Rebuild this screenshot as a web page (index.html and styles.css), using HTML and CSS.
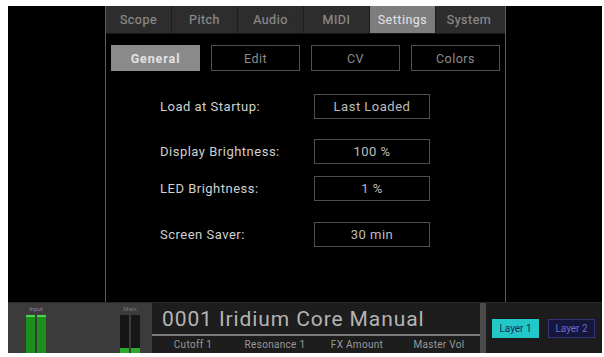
FILE: index.html
```html
<!DOCTYPE html>
<html lang="en">
<head>
  <meta charset="UTF-8">
  <title>Settings</title>
  <link rel="stylesheet" href="styles.css">
</head>
<body>
  <div class="device">
    <div class="main">
      <div class="side"></div>
      <div class="center">
        <div class="tabs">
          <div class="tab">Scope</div>
          <div class="tab">Pitch</div>
          <div class="tab">Audio</div>
          <div class="tab">MIDI</div>
          <div class="tab active">Settings</div>
          <div class="tab">System</div>
        </div>

        <div class="subtabs">
          <div class="subtab active">General</div>
          <div class="subtab">Edit</div>
          <div class="subtab">CV</div>
          <div class="subtab">Colors</div>
        </div>

        <div class="settings">
          <div class="row">
            <span class="label">Load at Startup:</span>
            <span class="value">Last Loaded</span>
          </div>
          <div class="row">
            <span class="label">Display Brightness:</span>
            <span class="value">100 %</span>
          </div>
          <div class="row tight">
            <span class="label">LED Brightness:</span>
            <span class="value">1 %</span>
          </div>
          <div class="row">
            <span class="label">Screen Saver:</span>
            <span class="value">30 min</span>
          </div>
        </div>
      </div>
      <div class="side"></div>
    </div>

    <div class="bottom">
      <div class="meters">
        <div class="meter input">
          <span class="meter-label">Input</span>
          <div class="bars"><i></i><i></i></div>
        </div>
        <div class="meter main-out">
          <span class="meter-label">Main</span>
          <div class="bars"><i></i><i></i></div>
        </div>
      </div>
      <div class="preset">
        <div class="preset-name">0001 Iridium Core Manual</div>
        <div class="params">
          <span>Cutoff 1</span>
          <span>Resonance 1</span>
          <span>FX Amount</span>
          <span>Master Vol</span>
        </div>
      </div>
      <div class="divider"></div>
      <div class="layers">
        <div class="layer on">Layer 1</div>
        <div class="layer">Layer 2</div>
      </div>
    </div>
  </div>
</body>
</html>
```

FILE: styles.css
```css
body {
  margin: 0;
  background: #fff;
  font-family: Roboto, "Liberation Sans", sans-serif;
}
.device {
  margin: 6px 2px 0 8px;
  width: 594px;
  height: 347px;
  background: #000;
  display: grid;
  grid-template-rows: 296px 51px;
}
.main {
  display: flex;
}
.side {
  width: 97px;
}
.side:last-child {
  width: 96px;
}
.center {
  width: 399px;
  border-left: 1px solid #5c5c5c;
  border-right: 1px solid #5c5c5c;
}
.tabs {
  display: grid;
  grid-template-columns: repeat(6, 66px);
  height: 27px;
  background: #2d2d2d;
  border-bottom: 1px solid #161616;
}
.tab {
  display: flex;
  align-items: center;
  justify-content: center;
  font-size: 12.5px;
  letter-spacing: 0.5px;
  color: #8a8a8a;
  border-right: 1px solid #1c1c1c;
  text-shadow: 0 0 1px rgba(140, 140, 140, 0.5);
}
.tab:last-child {
  border-right: none;
}
.tab.active {
  background: #7d7d7d;
  color: #e4e4e4;
}
.subtabs {
  display: grid;
  grid-template-columns: repeat(4, 89px);
  gap: 11px;
  margin: 11px 0 0 5px;
}
.subtab {
  height: 24px;
  border: 1px solid #505050;
  display: flex;
  align-items: center;
  justify-content: center;
  font-size: 12.5px;
  letter-spacing: 0.5px;
  color: #8c8c8c;
}
.subtab.active {
  background: #8a8a8a;
  border-color: #8a8a8a;
  color: #e2e2e2;
  font-weight: bold;
  letter-spacing: 0.9px;
}
.settings {
  margin: 23px 0 0 54px;
}
.row {
  display: flex;
  align-items: center;
  margin-bottom: 20px;
}
.row.tight {
  margin-bottom: 21px;
}
.row:nth-child(2) {
  margin-bottom: 12px;
}
.label {
  width: 154px;
  font-size: 13px;
  letter-spacing: 0.5px;
  color: #d0d0d0;
}
.value {
  width: 114px;
  height: 23px;
  border: 1px solid #4e4e4e;
  display: flex;
  align-items: center;
  justify-content: center;
  font-size: 13px;
  letter-spacing: 0.5px;
  color: #bdbdbd;
}
.bottom {
  display: flex;
  border-top: 1px solid #2a2a2a;
}
.meters {
  width: 144px;
  background: #3b3b3b;
  display: flex;
  padding-left: 18px;
  gap: 74px;
  box-sizing: border-box;
}
.meter {
  width: 20px;
  display: flex;
  flex-direction: column;
  align-items: center;
}
.meter-label {
  font-size: 6px;
  height: 12px;
  line-height: 12px;
  color: #8f7fa6;
}
.meter.main-out .meter-label {
  color: #777;
}
.bars {
  flex: 1;
  display: flex;
  gap: 2px;
  width: 20px;
}
.bars i {
  flex: 1;
  background: #1d8f1d;
  border-top: 2px solid #4cd44c;
}
.main-out .bars i {
  background: linear-gradient(to bottom, #161616 88%, #2fa82f 88%);
  border-top: none;
}
.preset {
  width: 328px;
  background: #1d1d1d;
  display: flex;
  flex-direction: column;
}
.preset-name {
  height: 31px;
  padding-left: 10px;
  font-size: 21px;
  letter-spacing: 0.9px;
  line-height: 32px;
  color: #b4b4b4;
  border-bottom: 2px solid #7a7a7a;
}
.params {
  flex: 1;
  display: grid;
  grid-template-columns: repeat(4, 1fr);
  align-items: center;
  font-size: 10px;
  letter-spacing: 0.3px;
  color: #999;
  text-align: center;
}
.divider {
  width: 6px;
  background: #4a4a4a;
}
.layers {
  flex: 1;
  background: #1c1c1c;
  display: flex;
  align-items: center;
  padding-left: 6px;
  gap: 9px;
}
.layer {
  width: 45px;
  height: 17px;
  border: 1px solid #33337a;
  background: #16163a;
  color: #6c6cd0;
  font-size: 10px;
  display: flex;
  align-items: center;
  justify-content: center;
}
.layer.on {
  background: #22c8c8;
  border-color: #22c8c8;
  color: #14285a;
}
```
